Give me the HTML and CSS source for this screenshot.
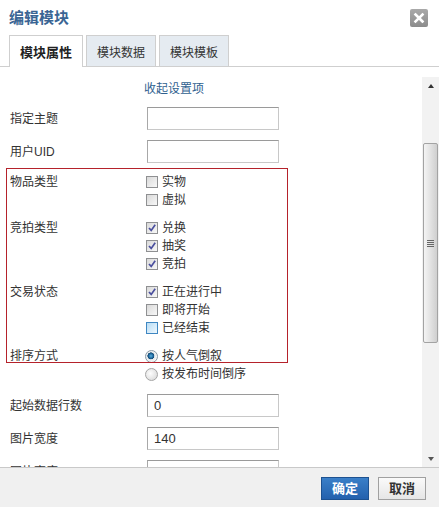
FILE: index.html
```html
<!DOCTYPE html>
<html lang="zh-CN">
<head>
<meta charset="utf-8">
<title>编辑模块</title>
<link rel="stylesheet" href="styles.css">
</head>
<body>
<div class="dialog">
  <div class="header">
    <div class="title">编辑模块</div>
    <div class="close">
      <svg width="18" height="18" viewBox="0 0 18 18"><path d="M5.5 5.5 L12.5 12.5 M12.5 5.5 L5.5 12.5" stroke="#fff" stroke-width="2.6" stroke-linecap="square"/></svg>
    </div>
  </div>
  <div class="tabs">
    <div class="tab active">模块属性</div>
    <div class="tab">模块数据</div>
    <div class="tab">模块模板</div>
  </div>
  <div class="body">
    <div class="form">
      <div class="collapse">收起设置项</div>
      <div class="fields">
        <div class="row">
          <div class="label">指定主题</div>
          <div class="input"></div>
        </div>
        <div class="row">
          <div class="label">用户UID</div>
          <div class="input"></div>
        </div>
        <div class="group">
          <div class="label">物品类型</div>
          <div class="opts">
            <div class="opt"><span class="cb"></span>实物</div>
            <div class="opt"><span class="cb"></span>虚拟</div>
          </div>
        </div>
        <div class="group">
          <div class="label">竞拍类型</div>
          <div class="opts">
            <div class="opt"><span class="cb checked"><svg width="10" height="10" viewBox="0 0 10 10"><path d="M2 5 L4.2 7.4 L8.2 1.8" fill="none" stroke="#4a4f9e" stroke-width="1.7"/></svg></span>兑换</div>
            <div class="opt"><span class="cb checked"><svg width="10" height="10" viewBox="0 0 10 10"><path d="M2 5 L4.2 7.4 L8.2 1.8" fill="none" stroke="#4a4f9e" stroke-width="1.7"/></svg></span>抽奖</div>
            <div class="opt"><span class="cb checked"><svg width="10" height="10" viewBox="0 0 10 10"><path d="M2 5 L4.2 7.4 L8.2 1.8" fill="none" stroke="#4a4f9e" stroke-width="1.7"/></svg></span>竞拍</div>
          </div>
        </div>
        <div class="group">
          <div class="label">交易状态</div>
          <div class="opts">
            <div class="opt"><span class="cb checked"><svg width="10" height="10" viewBox="0 0 10 10"><path d="M2 5 L4.2 7.4 L8.2 1.8" fill="none" stroke="#4a4f9e" stroke-width="1.7"/></svg></span>正在进行中</div>
            <div class="opt"><span class="cb"></span>即将开始</div>
            <div class="opt"><span class="cb hover"></span>已经结束</div>
          </div>
        </div>
        <div class="group">
          <div class="label">排序方式</div>
          <div class="opts">
            <div class="opt"><span class="radio on"></span>按人气倒叙</div>
            <div class="opt"><span class="radio"></span>按发布时间倒序</div>
          </div>
        </div>
        <div class="row">
          <div class="label">起始数据行数</div>
          <div class="input">0</div>
        </div>
        <div class="row">
          <div class="label">图片宽度</div>
          <div class="input">140</div>
        </div>
        <div class="row">
          <div class="label">图片高度</div>
          <div class="input"></div>
        </div>
      </div>
      <div class="highlight"></div>
    </div>
    <div class="scrollbar">
      <div class="arrow up"></div>
      <div class="track">
        <div class="thumb"><span class="grip"></span></div>
      </div>
      <div class="arrow down"></div>
    </div>
  </div>
  <div class="footer">
    <div class="btn primary">确定</div>
    <div class="btn">取消</div>
  </div>
</div>
</body>
</html>
```
FILE: styles.css
```css
* { box-sizing: border-box; }
html, body { margin: 0; padding: 0; background: #fff; }
body {
  font-family: "Liberation Sans", "Noto Sans CJK SC", sans-serif;
  font-size: 12px;
  color: #333;
}
.dialog { width: 439px; height: 507px; display: flex; flex-direction: column; }

.header {
  height: 35px;
  display: flex;
  align-items: center;
  justify-content: space-between;
  padding: 0 11px 0 9px;
}
.title { font-size: 15px; font-weight: bold; color: #3a6594; line-height: 20px; }
.close {
  width: 18px; height: 18px;
  border-radius: 2px;
  background: linear-gradient(#a9a9a9, #8c8c8c);
  display: flex;
}

.tabs {
  height: 32px;
  display: flex;
  align-items: flex-end;
  gap: 3px;
  padding-left: 9px;
  border-bottom: 1px solid #cfcfcf;
}
.tab {
  height: 31px;
  width: 70px;
  border: 1px solid #cfcfcf;
  border-bottom: none;
  background: #e5ebf1;
  text-align: center;
  line-height: 31px;
  padding-top: 2px;
  font-size: 12px;
  color: #333;
}
.tab.active {
  width: 74px;
  height: 32px;
  margin-bottom: -1px;
  background: #fff;
  font-size: 13px;
  font-weight: bold;
  color: #222;
  line-height: 30px;
}

.body { height: 400px; display: flex; overflow: hidden; }
.form { flex: 1; position: relative; overflow: hidden; padding-top: 11px; }
.collapse { padding-left: 144px; line-height: 22px; height: 22px; color: #30618f; }
.fields { margin-top: 7px; display: flex; flex-direction: column; gap: 10px; }
.row { display: flex; align-items: center; height: 23px; }
.label { width: 146px; flex: none; padding-left: 10px; line-height: 18px; color: #333; }
.input {
  width: 132px; height: 23px;
  margin-left: 1px;
  border: 1px solid #c8c8c8;
  border-top-color: #9a9a9a;
  border-left-color: #a8a8a8;
  padding-left: 6px;
  line-height: 21px;
  font-size: 13px;
  color: #333;
}
.group { display: flex; align-items: flex-start; }
.group + .row { margin-top: 1px; }
.opts { display: flex; flex-direction: column; }
.opt { display: flex; align-items: center; height: 18px; line-height: 18px; color: #333; }
.cb {
  width: 12px; height: 12px;
  margin-right: 4px;
  border: 1px solid #8f9092;
  background: linear-gradient(135deg, #d9d9d9, #f8f8f8);
  display: flex; align-items: center; justify-content: center;
}
.cb.hover {
  border-color: #3f87c2;
  background: linear-gradient(135deg, #b9ddf5, #eef8fe);
}
.radio {
  width: 13px; height: 13px;
  margin: 0 4px 0 -1px;
  border-radius: 50%;
  border: 1px solid #a5a5a5;
  background: radial-gradient(circle at 40% 40%, #fdfdfd, #d4d4d4);
}
.radio.on {
  border-color: #8b9aa6;
  background: radial-gradient(circle at 45% 45%, #5fb0dd 0, #1f6aa0 2.2px, #0f3f66 3.4px, #dfe6ea 3.6px, #f6f6f6 5.5px);
}
.highlight {
  position: absolute;
  left: 6px; top: 101px;
  width: 282px; height: 195px;
  border: 1px solid #b5222b;
  pointer-events: none;
}

.scrollbar {
  width: 17px;
  margin-top: 10px;
  background: #f2f2f2;
  display: flex; flex-direction: column;
}
.arrow { height: 17px; display: flex; align-items: center; justify-content: center; }
.arrow::before {
  content: "";
  width: 0; height: 0;
  border-left: 3.5px solid transparent;
  border-right: 3.5px solid transparent;
}
.arrow.up::before { border-bottom: 4px solid #333; }
.arrow.down::before { border-top: 4px solid #555; }
.track { flex: 1; padding: 49px 1px 0 1px; }
.thumb {
  height: 200px;
  border: 1px solid #a3a3a3;
  border-radius: 2px;
  background: linear-gradient(90deg, #f4f4f4, #e2e2e2 50%, #cfcfcf);
  display: flex; align-items: center; justify-content: center;
}
.grip {
  width: 7px; height: 7px;
  background: repeating-linear-gradient(#666 0 1px, transparent 1px 2px);
}

.footer {
  height: 40px;
  border-top: 1px solid #c9c9c9;
  background: #f0f0f0;
  display: flex;
  justify-content: flex-end;
  align-items: flex-start;
  padding: 9px 13px 0 0;
  gap: 9px;
}
.btn {
  width: 48px; height: 23px;
  border: 1px solid #a0a0a0;
  background: linear-gradient(#fafafa, #e6e6e6);
  text-align: center;
  line-height: 21px;
  font-size: 13px;
  font-weight: bold;
  color: #333;
}
.btn.primary {
  border-color: #1d5190;
  background: linear-gradient(#3a7fc8, #2461ad);
  color: #fff;
}
```
